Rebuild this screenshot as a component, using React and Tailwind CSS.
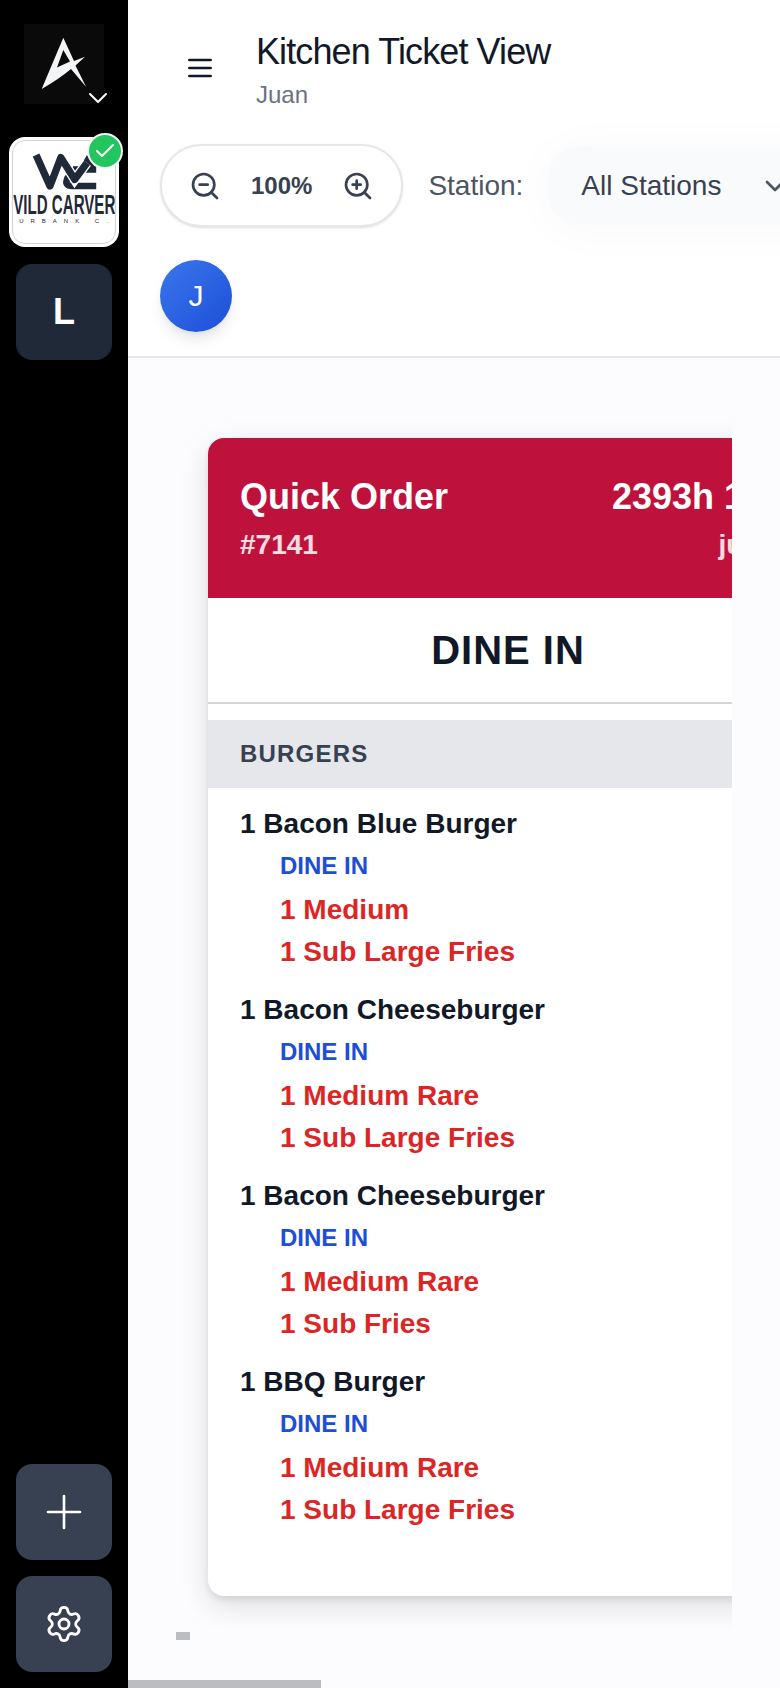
import { ChevronDown, Check, Settings, ZoomIn, ZoomOut } from 'lucide-react'

const items = [
  { name: '1 Bacon Blue Burger', mods: ['1 Medium', '1 Sub Large Fries'] },
  { name: '1 Bacon Cheeseburger', mods: ['1 Medium Rare', '1 Sub Large Fries'] },
  { name: '1 Bacon Cheeseburger', mods: ['1 Medium Rare', '1 Sub Fries'] },
  { name: '1 BBQ Burger', mods: ['1 Medium Rare', '1 Sub Large Fries'] },
]

function Sidebar() {
  return (
    <aside className="w-32 shrink-0 bg-black flex flex-col items-center pt-6 pb-4">
      <div className="relative w-20 h-20 bg-[#0a0a0a]">
        <svg viewBox="0 0 80 80" className="w-20 h-20">
          <path
            fillRule="evenodd"
            fill="#f3f4f6"
            d="M39.3 13.7L50 37L61 32.7L51.5 41.5L62 62.7L47 45Q35 55 17.7 65ZM39.3 26L33 43.5L46 37.5Z"
          />
        </svg>
        <ChevronDown size={32} strokeWidth={1.5} className="absolute -right-[10px] top-[58px] text-white" />
      </div>

      <div className="relative mt-[33px] w-[110px] h-[110px] bg-white rounded-2xl p-[3px]">
        <div className="w-full h-full rounded-[13px] border border-gray-300 overflow-hidden flex flex-col items-center">
          <svg viewBox="90 70 205 115" className="w-[68px] h-[38px] mt-[12px] shrink-0">
            <path
              d="M290 120H225L203 146Q192 170 218 170H290"
              fill="none"
              stroke="#1f2937"
              strokeWidth="20"
            />
            <path d="M262 76L290 118H238Z" fill="#1f2937" />
            <path d="M183 84L225 150L262 100" fill="none" stroke="white" strokeWidth="30" />
            <path
              d="M108 76L150 170L183 84L225 150L262 100"
              fill="none"
              stroke="#1f2937"
              strokeWidth="22"
              strokeLinejoin="round"
            />
          </svg>
          <div className="mt-[3px] scale-x-[0.56] whitespace-nowrap font-bold text-[27px] leading-[22px] text-[#1f2937]">VILD CARVER</div>
          <div className="mt-[1px] whitespace-nowrap text-[6px] leading-[8px] tracking-[7px] text-[#1f2937] pl-[6px]">URBANK C.</div>
        </div>
        <div className="absolute -right-1 -top-1 w-9 h-9 rounded-full bg-[#22c55e] border-2 border-gray-100 flex items-center justify-center">
          <Check size={24} strokeWidth={2} className="text-white" />
        </div>
      </div>

      <button className="mt-[17px] w-24 h-24 rounded-2xl bg-[#1f2937] text-white text-4xl font-bold flex items-center justify-center">
        L
      </button>

      <button className="mt-auto w-24 h-24 rounded-2xl bg-[#374151] flex items-center justify-center">
        <svg viewBox="0 0 24 24" className="w-12 h-12" fill="none" stroke="white" strokeWidth="1.3" strokeLinecap="round">
          <path d="M12 4v16M4 12h16" />
        </svg>
      </button>
      <button className="mt-4 w-24 h-24 rounded-2xl bg-[#374151] flex items-center justify-center">
        <Settings size={40} strokeWidth={1.7} className="text-white" />
      </button>
    </aside>
  )
}

function Header() {
  return (
    <header className="bg-white border-b-2 border-[#e5e7eb] pl-8 pt-6 pb-6">
      <div className="flex items-center h-[88px]">
        <button className="p-6 text-[#111827]">
          <svg viewBox="0 0 24 24" className="w-8 h-8" fill="none" stroke="currentColor" strokeWidth="2" strokeLinecap="round">
            <path d="M4 6h16M4 12h16M4 18h16" />
          </svg>
        </button>
        <div className="ml-4 mt-[7px]">
          <h1 className="text-4xl tracking-tight text-[#111827]">Kitchen Ticket View</h1>
          <p className="mt-[7px] text-2xl text-[#6b7280]">Juan</p>
        </div>
      </div>

      <div className="mt-8 flex items-center">
        <div className="shrink-0 flex items-center gap-[30px] h-[83px] px-[27px] bg-white border-2 border-[#e5e7eb] rounded-full shadow-sm text-[#374151]">
          <ZoomOut size={32} />
          <span className="text-2xl font-bold">100%</span>
          <ZoomIn size={32} />
        </div>
        <span className="ml-[25px] shrink-0 text-[28px] text-[#4b5563]">Station:</span>
        <div className="ml-[26px] shrink-0 flex items-center w-[300px] h-[77px] pl-8 rounded-[28px] bg-[#f9fafb] shadow-[0_4px_50px_rgba(17,24,39,0.03)]">
          <span className="text-[28px] text-[#374151]">All Stations</span>
          <ChevronDown size={32} className="ml-[38px] shrink-0 text-[#4b5563]" />
        </div>
      </div>

      <div className="mt-[33px] w-[72px] h-[72px] rounded-full bg-gradient-to-br from-[#3b76ec] to-[#1d4ed8] shadow-lg text-white text-3xl flex items-center justify-center">
        J
      </div>
    </header>
  )
}

function OrderItem({ item }) {
  return (
    <div className="mb-[19px]">
      <div className="text-[28px] leading-9 font-bold text-[#111827]">{item.name}</div>
      <div className="pl-10">
        <div className="mt-2 text-2xl leading-8 font-bold text-[#1d4ed8]">DINE IN</div>
        <div className="mt-[7px]">
          {item.mods.map((mod) => (
            <div key={mod} className="text-[28px] leading-[42px] font-bold text-[#dc2626]">{mod}</div>
          ))}
        </div>
      </div>
    </div>
  )
}

function TicketCard() {
  return (
    <div className="w-[600px] shrink-0 bg-white rounded-2xl shadow-[0_10px_30px_rgba(0,0,0,0.12),0_4px_6px_rgba(0,0,0,0.08)] overflow-hidden">
      <div className="h-40 bg-[#be123c] text-white px-8 pt-8 flex justify-between">
        <div>
          <div className="text-4xl leading-[54px] font-bold">Quick Order</div>
          <div className="text-[28px] leading-[42px] font-bold text-white/85">#7141</div>
        </div>
        <div className="text-right">
          <div className="text-4xl leading-[54px] font-bold">2393h 1m</div>
          <div className="text-[28px] leading-[42px] font-bold text-white/85">juan</div>
        </div>
      </div>
      <div className="h-[106px] border-b-2 border-[#d1d5db] flex items-center justify-center text-[40px] font-bold tracking-wide text-[#111827]">
        DINE IN
      </div>
      <div className="mt-4 h-[68px] bg-[#e5e7eb] px-8 flex items-center text-2xl font-bold tracking-wider text-[#374151]">
        BURGERS
      </div>
      <div className="px-8 pt-[18px] pb-[46px]">
        {items.map((item, i) => (
          <OrderItem key={i} item={item} />
        ))}
      </div>
    </div>
  )
}

export default function App() {
  return (
    <div className="w-[780px] h-[1688px] flex overflow-hidden font-['Liberation_Sans',sans-serif]">
      <Sidebar />
      <main className="flex-1 min-w-0 flex flex-col bg-[#fcfcfe]">
        <Header />
        <div className="flex-1 min-h-0 ml-12 w-[556px] pl-8 pt-20 overflow-hidden">
          <TicketCard />
          <div className="-ml-8 mt-9 w-[14px] h-2 bg-[#bcbdc1]" />
        </div>
        <div className="w-[193px] h-2 bg-[#bcbdc1]" />
      </main>
    </div>
  )
}
